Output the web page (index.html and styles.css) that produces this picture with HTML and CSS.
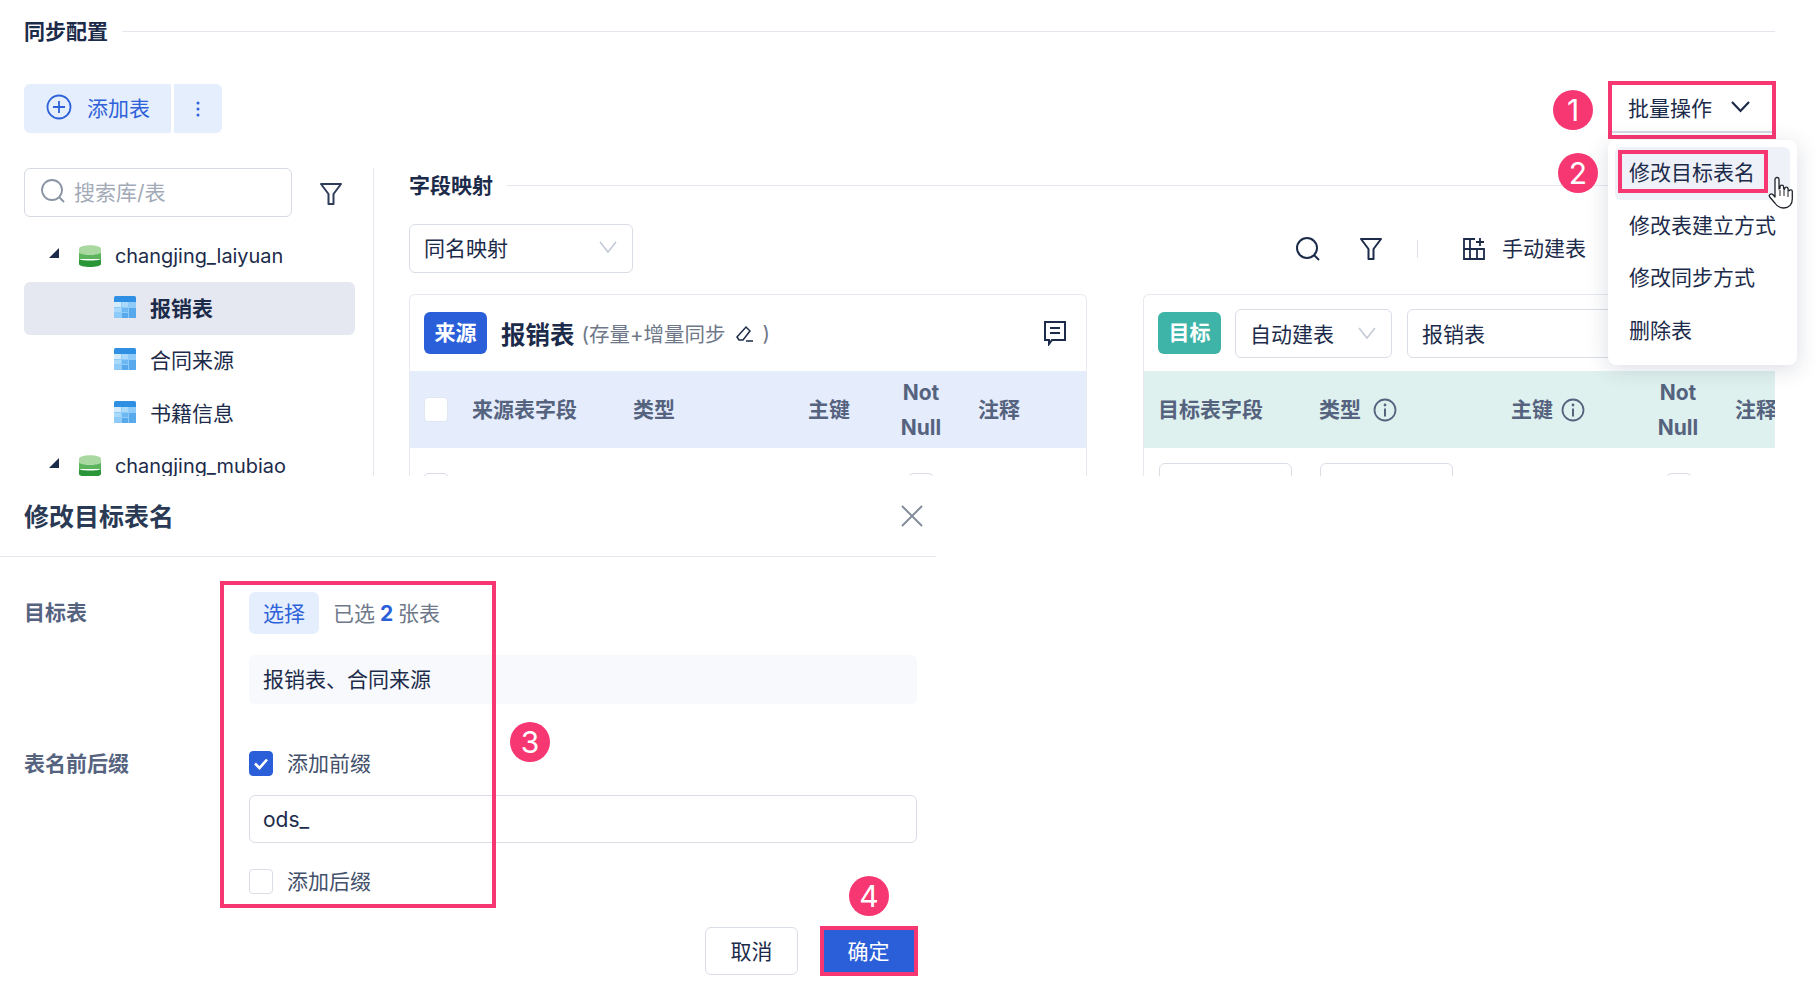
FILE: index.html
```html
<!DOCTYPE html>
<html lang="zh-CN">
<head>
    <meta charset="UTF-8">
    <title>同步配置</title>
    <link rel="stylesheet" href="styles.css">
</head>
<body>
<div class="page">
    <svg width="0" height="0" class="defs">
        <defs>
            <symbol id="db" viewBox="0 0 22 22">
                <path d="M0 4c0-5 22-5 22 0v5H0z" fill="#a9d8a0"/>
                <path d="M0 8c3 2 19 2 22 0v6H0z" fill="#5cb45c"/>
                <path d="M0 14c3 2 19 2 22 0v5c0 4-22 4-22 0z" fill="#2a9638"/>
            </symbol>
            <symbol id="tbl" viewBox="0 0 22 22">
                <rect width="22" height="22" rx="2" fill="#8fcbf8"/>
                <path d="M2 0h18a2 2 0 0 1 2 2v4H0V2a2 2 0 0 1 2-2z" fill="#2f8fe3"/>
                <rect x="0" y="6" width="7" height="5" fill="#d3ecfd"/>
                <rect x="8" y="6" width="6" height="5" fill="#a9d9fb"/>
                <rect x="0" y="12" width="7" height="4" fill="#a9d9fb"/>
                <rect x="8" y="12" width="6" height="4" fill="#6db8f2"/>
                <rect x="15" y="12" width="7" height="10" fill="#58a9ec"/>
                <rect x="8" y="17" width="6" height="5" fill="#58a9ec"/>
                <rect x="0" y="17" width="7" height="5" fill="#8fcbf8"/>
            </symbol>
            <symbol id="funnel" viewBox="0 0 24 24">
                <path d="M2 2h20l-7.500 10v10h-5V12z" fill="none" stroke="currentColor" stroke-width="2" stroke-linejoin="round"/>
            </symbol>
            <symbol id="info" viewBox="0 0 24 24">
                <circle cx="12" cy="12" r="10.500" fill="none" stroke="currentColor" stroke-width="1.800"/>
                <circle cx="12" cy="7" r="1.400" fill="currentColor"/>
                <path d="M12 10.500v8" stroke="currentColor" stroke-width="2"/>
            </symbol>
            <symbol id="arrow" viewBox="0 0 18 12">
                <path d="M1 1l8 10 8-10" fill="none" stroke="#c3cad6" stroke-width="1.600"/>
            </symbol>
        </defs>
    </svg>

    <section class="config">
        <div class="section-head head-top">
            <h2>同步配置</h2>
            <i class="rule"></i>
        </div>

        <div class="toolbar">
            <div class="add-group">
                <button class="add-btn">
                    <svg width="26" height="26" viewBox="0 0 26 26"><circle cx="13" cy="13" r="11.500" fill="none" stroke="#2f62d9" stroke-width="1.800"/><path d="M13 7v12M7 13h12" stroke="#2f62d9" stroke-width="1.800"/></svg>
                    添加表
                </button>
                <button class="more-btn">
                    <svg width="4" height="16" viewBox="0 0 4 16"><circle cx="2" cy="2" r="1.500" fill="#2f62d9"/><circle cx="2" cy="8" r="1.500" fill="#2f62d9"/><circle cx="2" cy="14" r="1.500" fill="#2f62d9"/></svg>
                </button>
            </div>
            <div class="batch">
                <button class="batch-btn">
                    批量操作
                    <svg width="21" height="13" viewBox="0 0 21 13"><path d="M2 2l8.500 9 8.500-9" fill="none" stroke="#1c2b4a" stroke-width="2.200"/></svg>
                </button>
                <span class="mark mark-batch"></span>
                <div class="menu">
                    <div class="menu-item active">
                        修改目标表名
                        <span class="mark mark-item"></span>
                        <svg class="hand" width="27" height="33" viewBox="0 0 27 33">
                            <path d="M7 21V3.500a2 2 0 0 1 4 0V13l1-.5V11a1.800 1.800 0 0 1 3.600 0v2l1 .3V12.500a1.800 1.800 0 0 1 3.500 0v2l1 .3a1.700 1.700 0 0 1 3.200 1V23c0 5-3 9-8.500 9-5 0-7-2-9-5l-5-6c-1.500-2 1-4 3-2.500z" fill="#fff" stroke="#20242c" stroke-width="1.300" stroke-linejoin="round"/>
                            <path d="M12 14v6M16 14v6M20 15v6" stroke="#20242c" stroke-width="1"/>
                        </svg>
                    </div>
                    <div class="menu-item">修改表建立方式</div>
                    <div class="menu-item">修改同步方式</div>
                    <div class="menu-item">删除表</div>
                </div>
            </div>
        </div>

        <div class="workspace">
            <aside class="sidebar">
                <div class="search-row">
                    <div class="search">
                        <svg width="26" height="26" viewBox="0 0 26 26"><circle cx="12" cy="12" r="10" fill="none" stroke="#8b94a5" stroke-width="1.800"/><path d="M19 19l5 5" stroke="#8b94a5" stroke-width="1.800"/></svg>
                        <span>搜索库/表</span>
                    </div>
                    <svg class="side-filter" width="24" height="24"><use href="#funnel"/></svg>
                </div>
                <ul class="tree">
                    <li class="tree-row">
                        <svg class="tri" width="10" height="10" viewBox="0 0 10 10"><path d="M10 0v10H0z" fill="#1c2b4a"/></svg>
                        <svg width="22" height="22"><use href="#db"/></svg>
                        <span class="db-name">changjing_laiyuan</span>
                    </li>
                    <li class="tree-row leaf current">
                        <svg width="22" height="22"><use href="#tbl"/></svg>
                        <span>报销表</span>
                    </li>
                    <li class="tree-row leaf">
                        <svg width="22" height="22"><use href="#tbl"/></svg>
                        <span>合同来源</span>
                    </li>
                    <li class="tree-row leaf">
                        <svg width="22" height="22"><use href="#tbl"/></svg>
                        <span>书籍信息</span>
                    </li>
                    <li class="tree-row">
                        <svg class="tri" width="10" height="10" viewBox="0 0 10 10"><path d="M10 0v10H0z" fill="#1c2b4a"/></svg>
                        <svg width="22" height="22"><use href="#db"/></svg>
                        <span class="db-name">changjing_mubiao</span>
                    </li>
                </ul>
            </aside>

            <main class="mapping">
                <div class="section-head head-map">
                    <h2>字段映射</h2>
                    <i class="rule"></i>
                </div>
                <div class="map-tools">
                    <div class="select map-select">同名映射<svg width="18" height="12"><use href="#arrow"/></svg></div>
                    <div class="tools-right">
                        <svg width="26" height="26" viewBox="0 0 26 26"><circle cx="12" cy="12" r="10" fill="none" stroke="#1c2b4a" stroke-width="2"/><path d="M19 19l5 5" stroke="#1c2b4a" stroke-width="2"/></svg>
                        <svg class="tool-filter" width="24" height="24"><use href="#funnel"/></svg>
                        <i class="tool-sep"></i>
                        <svg class="tool-grid" width="24" height="24" viewBox="0 0 24 24"><path d="M13 2H2v20h20V12H2M8 2v20M15 12v10M18 1v8M14 5h8" fill="none" stroke="#1c2b4a" stroke-width="1.800"/></svg>
                        <span class="tool-label">手动建表</span>
                    </div>
                </div>

                <div class="cards">
                    <div class="card source">
                        <div class="card-head">
                            <span class="tag tag-blue">来源</span>
                            <b class="card-name">报销表</b>
                            <span class="card-sub">(存量+增量同步
                                <svg width="19" height="19" viewBox="0 0 19 19"><path d="M2 13L11 3l4 4-7 9H4zM11 17h7" fill="none" stroke="#1c2b4a" stroke-width="1.500"/></svg>
                                )</span>
                            <svg class="comment" width="24" height="26" viewBox="0 0 24 26"><path d="M2 2h20v18H9l-3 4v-4H2zM7 8h10M7 13h10" fill="none" stroke="#1c2b4a" stroke-width="2"/></svg>
                        </div>
                        <div class="thead src-cols">
                            <span class="check white"></span>
                            <span>来源表字段</span>
                            <span>类型</span>
                            <span>主键</span>
                            <span class="notnull">Not<br>Null</span>
                            <span class="th-note">注释</span>
                        </div>
                        <div class="trow src-cols">
                            <span class="check"></span>
                            <span></span><span></span><span></span>
                            <span class="notnull"><span class="check"></span></span>
                        </div>
                    </div>

                    <div class="card target">
                        <div class="card-head">
                            <span class="tag tag-green">目标</span>
                            <div class="select target-select">自动建表<svg width="18" height="12"><use href="#arrow"/></svg></div>
                            <div class="select target-name">报销表</div>
                        </div>
                        <div class="thead tgt-cols">
                            <span>目标表字段</span>
                            <span class="with-info">类型<svg width="24" height="24"><use href="#info"/></svg></span>
                            <span class="with-info tight">主键<svg width="24" height="24"><use href="#info"/></svg></span>
                            <span class="notnull">Not<br>Null</span>
                            <span class="th-note">注释</span>
                        </div>
                        <div class="trow tgt-row tgt-cols">
                            <span class="cell-input"></span>
                            <span class="cell-input"></span>
                            <span></span>
                            <span class="notnull"><span class="check"></span></span>
                        </div>
                    </div>
                </div>
            </main>
        </div>
    </section>

    <section class="dialog">
        <header class="dialog-head">
            <h3>修改目标表名</h3>
            <svg width="24" height="24" viewBox="0 0 24 24"><path d="M2 2l20 20M22 2L2 22" stroke="#848d9c" stroke-width="2"/></svg>
        </header>
        <div class="dialog-body">
            <span class="mark mark-form"></span>
            <div class="form-row">
                <label>目标表</label>
                <div class="form-main">
                    <div class="picker">
                        <button class="pick-btn">选择</button>
                        <span class="picked">已选 <b>2</b> 张表</span>
                    </div>
                    <div class="picked-list">报销表、合同来源</div>
                </div>
            </div>
            <div class="form-row affix">
                <label>表名前后缀</label>
                <div class="form-main">
                    <div class="check-line">
                        <span class="check on">
                            <svg width="16" height="13" viewBox="0 0 16 13"><path d="M2 6.500l4.500 4.500L14 2.500" fill="none" stroke="#fff" stroke-width="2.600"/></svg>
                        </span>
                        <span class="check-text">添加前缀</span>
                    </div>
                    <div class="text-input">ods_</div>
                    <div class="check-line last">
                        <span class="check"></span>
                        <span class="check-text">添加后缀</span>
                    </div>
                </div>
            </div>
        </div>
        <footer class="dialog-foot">
            <button class="btn-cancel">取消</button>
            <div class="ok-wrap">
                <button class="btn-ok">确定</button>
                <span class="mark mark-ok"></span>
            </div>
        </footer>
    </section>

    <span class="badge b1">1</span>
    <span class="badge b2">2</span>
    <span class="badge b3">3</span>
    <span class="badge b4">4</span>
</div>
</body>
</html>
```

FILE: styles.css
```css
*{
    box-sizing: border-box;
}
body{
    margin: 0;
    background: white;
    color: #1c2b4a;
    font-family: Inter, "Noto Sans CJK SC", sans-serif;
    font-size: 21px;
}
button{
    font: inherit;
    color: inherit;
    cursor: pointer;
}
.page{
    position: relative;
    width: 1816px;
    height: 991px;
    overflow: hidden;
}
.defs{
    position: absolute;
}
svg{
    flex: none;
    display: block;
}

.mark{
    position: absolute;
    border: 4px solid #f73772;
    pointer-events: none;
}
.badge{
    position: absolute;
    z-index: 5;
    width: 40px;
    height: 40px;
    border-radius: 50%;
    background: #f73772;
    color: white;
    font-size: 30px;
    line-height: 40px;
    text-align: center;
}
.b1{ left: 1553px; top: 90px; }
.b2{ left: 1558px; top: 153px; }
.b3{ left: 510px; top: 722px; }
.b4{ left: 849px; top: 876px; }

/* top panel */
.config{
    height: 476px;
    padding: 0 41px 0 24px;
    overflow: hidden;
}
.section-head{
    display: flex;
    align-items: center;
    gap: 14px;
}
.section-head h2{
    margin: 0;
    font-size: 21px;
    line-height: 34px;
    font-weight: 700;
    white-space: nowrap;
}
.rule{
    flex: 1;
    height: 1px;
    background: #e4e7ee;
}
.head-top{
    padding-top: 15px;
}
.head-top .rule{
    margin-top: -2px;
}
.head-map h2{
    padding-top: 1px;
}
.toolbar{
    display: flex;
    justify-content: space-between;
    margin-top: 35px;
    height: 49px;
}
.add-group{
    display: flex;
    gap: 3px;
}
.add-btn,
.more-btn{
    display: flex;
    align-items: center;
    border: 0;
    background: #e5eefd;
    color: #2f62d9;
}
.add-btn{
    width: 147px;
    gap: 15px;
    padding: 0 0 3px 22px;
    border-radius: 6px 0 0 6px;
}
.more-btn{
    width: 48px;
    justify-content: center;
    border-radius: 0 6px 6px 0;
}
.batch{
    position: relative;
    z-index: 3;
    width: 167px;
}
.batch-btn{
    display: flex;
    align-items: center;
    gap: 18px;
    width: 100%;
    height: 49px;
    padding: 0 0 2px 20px;
    background: white;
    border: 0;
    border-bottom: 2px solid #d5dae3;
}
.mark-batch{
    top: -3px;
    left: 0;
    right: -1px;
    bottom: -6px;
}
.menu{
    position: absolute;
    top: 56px;
    right: -22px;
    width: 189px;
    height: 225px;
    padding: 7px;
    background: white;
    border-radius: 8px;
    box-shadow: 0 4px 22px rgba(30,45,80,0.16);
}
.menu-item{
    position: relative;
    height: 52.600px;
    line-height: 52.500px;
    padding-left: 14px;
    border-radius: 6px;
    white-space: nowrap;
}
.menu-item.active{
    background: #eef1f7;
}
.mark-item{
    top: 3px;
    left: 3px;
    right: 22px;
    bottom: 7px;
}
.hand{
    position: absolute;
    left: 153px;
    top: 29px;
}

.workspace{
    display: flex;
    margin-top: 35px;
}
.sidebar{
    flex: none;
    width: 350px;
    height: 310px;
    padding-right: 18px;
    border-right: 1px solid #e4e7ee;
}
.search-row{
    display: flex;
    align-items: center;
}
.search{
    display: flex;
    align-items: center;
    gap: 8px;
    width: 268px;
    height: 49px;
    padding: 0 0 3px 15px;
    border: 1px solid #d5dae3;
    border-radius: 6px;
    color: #a3aab7;
}
.side-filter{
    margin-left: 27px;
    margin-top: 2px;
    color: #2d3c58;
}
.tree{
    list-style: none;
    margin: 13px 0 0;
    padding: 0;
}
.tree-row{
    display: flex;
    align-items: center;
    gap: 14px;
    height: 52.400px;
    padding-left: 25px;
    border-radius: 6px;
    white-space: nowrap;
}
.tri{
    margin-right: 6px;
    margin-top: -6px;
}
.db-name{
    font-size: 19.900px;
}
.tree-row.leaf{
    padding-left: 90px;
    padding-bottom: 3px;
}
.tree-row.current{
    background: #e5e8f0;
    font-weight: 700;
}

.mapping{
    flex: 1;
    min-width: 0;
    padding-left: 35px;
}
.map-tools{
    display: flex;
    justify-content: space-between;
    align-items: center;
    margin-top: 21px;
}
.select{
    display: flex;
    align-items: center;
    justify-content: space-between;
    height: 49px;
    padding: 0 15px 0 14px;
    border: 1px solid #d9dde6;
    border-radius: 6px;
    white-space: nowrap;
}
.map-select{
    width: 224px;
    padding-bottom: 3px;
}
.tools-right{
    display: flex;
    align-items: center;
    padding-right: 189px;
}
.tool-filter{
    margin-left: 38px;
}
.tool-sep{
    width: 1px;
    height: 18px;
    margin: 0 44px 0 34px;
    background: #e0e4ea;
}
.tool-grid{
    margin-right: 16px;
}
.tool-label{
    padding-bottom: 4px;
}

.cards{
    display: flex;
    gap: 56px;
    margin-top: 21px;
}
.card{
    height: 260px;
    border: 1px solid #e6e9ef;
    border-radius: 6px 6px 0 0;
    overflow: hidden;
}
.source{
    flex: none;
    width: 678px;
}
.target{
    flex: 1;
    min-width: 0;
    border-right: 0;
}
.card-head{
    display: flex;
    align-items: center;
    height: 76px;
    padding: 0 14px;
}
.tag{
    flex: none;
    width: 63px;
    height: 42px;
    border-radius: 6px;
    color: white;
    font-weight: 700;
    line-height: 42px;
    text-align: center;
}
.tag-blue{
    background: #2b5fd9;
}
.tag-green{
    background: #3db4a7;
}
.card-name{
    margin-left: 14px;
    font-size: 24.500px;
}
.card-sub{
    display: flex;
    align-items: center;
    gap: 9px;
    margin-left: 7px;
    color: #6e7889;
    font-size: 20.500px;
}
.comment{
    margin-left: auto;
    margin-right: 5px;
}
.thead,
.trow{
    display: grid;
    align-items: center;
    padding-left: 14px;
}
.thead{
    height: 77px;
    color: #55637f;
    font-weight: 700;
    line-height: 35px;
    white-space: nowrap;
}
.source .thead{
    background: #e5edfc;
}
.target .thead{
    background: #dff1ee;
}
.src-cols{
    grid-template-columns: 48px 161px 175px 77px 72px auto;
}
.tgt-cols{
    grid-template-columns: 161px 192px 132px 70px auto;
}
.th-note{
    margin-left: 21px;
}
.target .th-note{
    margin-left: 22px;
}
.notnull{
    display: flex;
    justify-content: center;
    text-align: center;
}
.thead .notnull{
    display: block;
}
.with-info{
    display: flex;
    align-items: center;
    gap: 12px;
}
.with-info.tight{
    gap: 8px;
}
.check{
    display: flex;
    align-items: center;
    justify-content: center;
    width: 24px;
    height: 25px;
    border: 1px solid #d9dde6;
    border-radius: 4px;
    background: white;
}
.check.white{
    border-color: #e0e6f2;
}
.check.on{
    background: #2b5fd9;
    border-color: #2b5fd9;
}
.trow{
    padding-top: 25px;
}
.target-select{
    flex: none;
    width: 157px;
    margin-left: 14px;
}
.target-name{
    flex: 1;
    margin-left: 15px;
}
.tgt-row{
    align-items: start;
    padding-top: 15px;
    padding-left: 15px;
}
.cell-input{
    width: 133px;
    height: 49px;
    border: 1px solid #d9dde6;
    border-radius: 6px;
}
.tgt-row .notnull{
    padding-top: 10px;
}

/* dialog */
.dialog{
    position: relative;
    width: 936px;
}
.dialog-head{
    display: flex;
    align-items: center;
    justify-content: space-between;
    height: 81px;
    padding: 0 12px 0 24px;
    border-bottom: 1px solid #e4e7ee;
}
.dialog-head h3{
    margin: 0;
    padding-bottom: 3px;
    font-size: 25px;
    color: #2a3a55;
}
.dialog-body{
    position: relative;
    padding: 35px 19px 0 24px;
}
.mark-form{
    top: 24px;
    left: 220px;
    width: 276px;
    height: 327px;
}
.form-row{
    display: flex;
}
.form-row label{
    flex: none;
    width: 225px;
    padding-top: 4px;
    line-height: 34px;
    color: #55637f;
    font-weight: 700;
}
.form-main{
    flex: 1;
    min-width: 0;
}
.picker{
    display: flex;
    align-items: center;
    gap: 14px;
    height: 42px;
}
.pick-btn{
    width: 70px;
    height: 42px;
    padding: 0 0 2px;
    border: 0;
    border-radius: 6px;
    background: #e5eefd;
    color: #2f62d9;
}
.picked{
    padding-bottom: 2px;
    word-spacing: -1px;
    color: #6e7889;
}
.picked b{
    color: #2b5fd9;
}
.picked-list{
    height: 49px;
    margin-top: 21px;
    padding-left: 14px;
    line-height: 49px;
    border-radius: 6px;
    background: #f7f9fc;
}
.affix{
    margin-top: 47px;
}
.affix label{
    padding-top: 0;
    margin-top: -4px;
}
.check-line{
    display: flex;
    align-items: center;
    gap: 14px;
    height: 25px;
    color: #43506b;
}
.check-line.last{
    margin-top: 26px;
}
.check-text{
    padding-bottom: 4px;
}
.text-input{
    height: 48px;
    margin-top: 19px;
    padding-left: 13px;
    line-height: 48px;
    border: 1px solid #d9dde6;
    border-radius: 6px;
}
.dialog-foot{
    display: flex;
    justify-content: flex-end;
    gap: 22px;
    margin-top: 33px;
    padding-right: 19px;
}
.btn-cancel{
    width: 93px;
    height: 48px;
    padding: 0 0 2px;
    border: 1px solid #d9dde6;
    border-radius: 6px;
    background: white;
}
.ok-wrap{
    position: relative;
    width: 97px;
    height: 48px;
}
.btn-ok{
    width: 100%;
    height: 100%;
    padding: 0 0 2px;
    border: 0;
    border-radius: 6px;
    background: #2b5fd9;
    color: white;
}
.mark-ok{
    top: -1px;
    left: 0;
    right: -1px;
    bottom: -1px;
}
```
